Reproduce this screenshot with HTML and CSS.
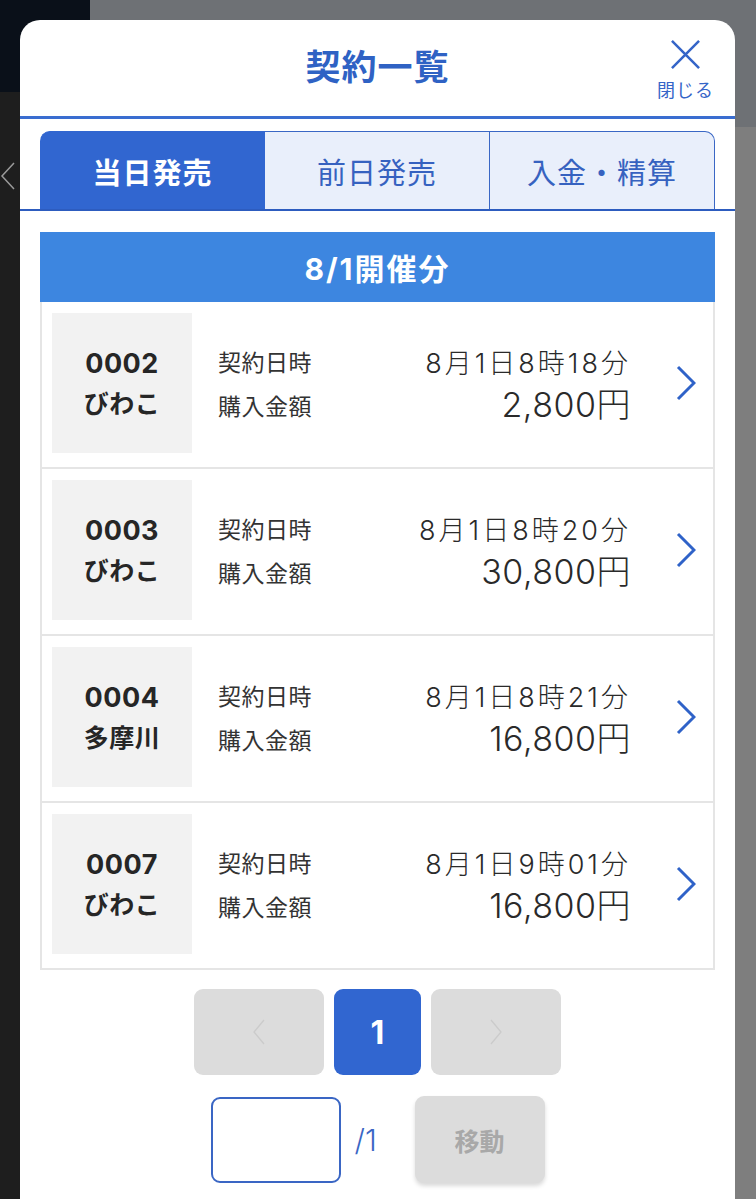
FILE: index.html
```html
<!DOCTYPE html>
<html lang="ja">
<head>
<meta charset="utf-8">
<title>契約一覧</title>
<link rel="stylesheet" href="styles.css">
</head>
<body>
<div class="under-page" aria-hidden="true">
  <svg class="under-back" viewBox="0 0 16 30"><path d="M14 2 L2 15 L14 28"/></svg>
</div>
<div class="modal">
  <header class="modal-header">
    <div class="header-spacer"></div>
    <h1 class="modal-title">契約一覧</h1>
    <button class="close-btn" type="button">
      <svg class="close-icon" viewBox="0 0 32 32"><path d="M2 2 L30 30 M30 2 L2 30"/></svg>
      <span class="close-label">閉じる</span>
    </button>
  </header>
  <nav class="tabs">
    <div class="tab tab-active">当日発売</div>
    <div class="tab tab-mid">前日発売</div>
    <div class="tab tab-last">入金・精算</div>
  </nav>
  <section class="content">
    <div class="date-bar">8/1開催分</div>
    <ul class="contract-list">
      <li class="contract">
        <div class="place"><span class="num">0002</span><span class="name">びわこ</span></div>
        <dl class="info">
          <dt>契約日時</dt><dd class="date">8月1日8時18分</dd>
          <dt>購入金額</dt><dd class="amount">2,800円</dd>
        </dl>
        <svg class="chev" viewBox="0 0 20 36"><path d="M2 2 L18 18 L2 34"/></svg>
      </li>
      <li class="contract">
        <div class="place"><span class="num">0003</span><span class="name">びわこ</span></div>
        <dl class="info">
          <dt>契約日時</dt><dd class="date">8月1日8時20分</dd>
          <dt>購入金額</dt><dd class="amount">30,800円</dd>
        </dl>
        <svg class="chev" viewBox="0 0 20 36"><path d="M2 2 L18 18 L2 34"/></svg>
      </li>
      <li class="contract">
        <div class="place"><span class="num">0004</span><span class="name">多摩川</span></div>
        <dl class="info">
          <dt>契約日時</dt><dd class="date">8月1日8時21分</dd>
          <dt>購入金額</dt><dd class="amount">16,800円</dd>
        </dl>
        <svg class="chev" viewBox="0 0 20 36"><path d="M2 2 L18 18 L2 34"/></svg>
      </li>
      <li class="contract">
        <div class="place"><span class="num">0007</span><span class="name">びわこ</span></div>
        <dl class="info">
          <dt>契約日時</dt><dd class="date">8月1日9時01分</dd>
          <dt>購入金額</dt><dd class="amount">16,800円</dd>
        </dl>
        <svg class="chev" viewBox="0 0 20 36"><path d="M2 2 L18 18 L2 34"/></svg>
      </li>
    </ul>
    <div class="pager">
      <button class="page-btn page-arrow" type="button"><svg class="page-chev" viewBox="0 0 12 26"><path d="M11 1 L1 13 L11 25"/></svg></button>
      <button class="page-btn page-current" type="button">1</button>
      <button class="page-btn page-arrow" type="button"><svg class="page-chev" viewBox="0 0 12 26"><path d="M1 1 L11 13 L1 25"/></svg></button>
    </div>
    <div class="jump">
      <input class="jump-input" type="text" aria-label="ページ">
      <span class="jump-total">/1</span>
      <button class="jump-btn" type="button">移動</button>
    </div>
  </section>
</div>
</body>
</html>
```

FILE: styles.css
```css
* { box-sizing: border-box; }

html, body {
  margin: 0;
  padding: 0;
}

body {
  height: 1199px;
  overflow: hidden;
  padding: 20px 21px 0 20px;
  font-family: "Noto Sans CJK JP", "Noto Sans", sans-serif;
  color: #222;
  background:
    linear-gradient(#0a1019, #0a1019) 0 0 / 90px 92px no-repeat,
    linear-gradient(#1e1e1e, #1e1e1e) 0 0 / 20px 100% no-repeat,
    linear-gradient(#6e7175, #6e7175) 0 0 / 100% 127px no-repeat,
    #7e7e7e;
  position: relative;
}

.under-page {
  position: absolute;
  left: 0;
  top: 161px;
  width: 20px;
  height: 32px;
}

.under-back {
  width: 16px;
  height: 30px;
  fill: none;
  stroke: #9a9a9a;
  stroke-width: 1.5;
}

.modal {
  position: relative;
  background: #fff;
  border-radius: 20px 20px 0 0;
  height: 1200px;
  overflow: hidden;
}

/* Header */
.modal-header {
  display: grid;
  grid-template-columns: 1fr auto 1fr;
  align-items: center;
  height: 99px;
  border-bottom: 3px solid #3a6dd0;
  padding: 0 21px;
}

.modal-title {
  margin: -7px 0 0;
  font-size: 35px;
  font-weight: 700;
  letter-spacing: 1px;
  color: #2f62c4;
  line-height: 1;
}

.close-btn {
  justify-self: end;
  display: flex;
  flex-direction: column;
  align-items: center;
  background: none;
  border: 0;
  padding: 0;
  margin-top: 0;
  font-family: inherit;
  cursor: pointer;
}

.close-icon {
  width: 31px;
  height: 31px;
  fill: none;
  stroke: #3565c8;
  stroke-width: 2.6;
}

.close-label {
  margin-top: 10px;
  font-size: 18px;
  line-height: 1;
  color: #3565c8;
  letter-spacing: 1px;
}

/* Tabs */
.tabs {
  display: grid;
  grid-template-columns: repeat(3, 1fr);
  padding: 12px 20px 0;
  border-bottom: 2px solid #2d5cbf;
}

.tab {
  height: 78px;
  display: flex;
  align-items: center;
  justify-content: center;
  font-size: 29px;
  color: #3662c0;
  background: #e9effb;
  border-top: 1.5px solid #3a67c5;
  letter-spacing: 1px;
}

.tab-active {
  background: #3166d0;
  color: #fff;
  font-weight: 700;
  border-top-color: #3166d0;
  border-radius: 10px 0 0 0;
}

.tab-mid {
  border-right: 1.5px solid #3a67c5;
}

.tab-last {
  border-right: 1.5px solid #3a67c5;
  border-radius: 0 10px 0 0;
}

/* Content */
.content {
  padding: 21px 20px 0;
}

.date-bar {
  height: 70px;
  background: #3d86e0;
  color: #fff;
  font-family: "Inter", "Noto Sans CJK JP", sans-serif;
  font-size: 30px;
  font-weight: 700;
  display: flex;
  align-items: center;
  justify-content: center;
  letter-spacing: 2px;
}

.contract-list {
  list-style: none;
  margin: 0;
  padding: 0;
  border: 2px solid #e5e5e5;
  border-top: 0;
}

.contract {
  display: flex;
  align-items: center;
  padding: 11px 10px 14px 10px;
  border-bottom: 2px solid #e5e5e5;
}

.contract:last-child {
  border-bottom: 0;
}

.place {
  width: 140px;
  height: 140px;
  flex: none;
  background: #f2f2f2;
  display: flex;
  flex-direction: column;
  align-items: center;
  justify-content: center;
  font-weight: 700;
  color: #262626;
}

.num {
  font-family: "Inter", "Noto Sans CJK JP", sans-serif;
  font-size: 27px;
  line-height: 38px;
  letter-spacing: 0.5px;
}

.name {
  font-size: 25px;
  line-height: 38px;
  letter-spacing: 0.5px;
}

.info {
  flex: 1;
  margin: 0 0 0 26px;
  display: grid;
  grid-template-columns: auto 1fr;
  grid-auto-rows: 44px;
  align-items: center;
}

.info dt {
  font-size: 23px;
  color: #333;
  letter-spacing: 0.5px;
}

.info dd {
  margin: 0;
  text-align: right;
  color: #2a2a2a;
  font-family: "Inter", "Noto Sans CJK JP", sans-serif;
  font-weight: 300;
}

.date {
  font-size: 27px;
  letter-spacing: 3px;
  margin-right: -3px;
}

.amount {
  font-size: 34px;
  letter-spacing: 0.5px;
  line-height: 1;
}

.chev {
  flex: none;
  width: 20px;
  height: 36px;
  margin: 0 7px 0 45px;
  fill: none;
  stroke: #2f62c8;
  stroke-width: 3;
}

/* Pager */
.pager {
  display: flex;
  justify-content: center;
  gap: 10px;
  margin-top: 19px;
}

.page-btn {
  height: 86px;
  border: 0;
  border-radius: 9px;
  font-family: inherit;
  display: flex;
  align-items: center;
  justify-content: center;
  padding: 0;
}

.page-arrow {
  width: 130px;
  background: #dcdcdc;
}

.page-chev {
  width: 12px;
  height: 26px;
  fill: none;
  stroke: #cbcbcb;
  stroke-width: 1.3;
}

.page-current {
  width: 87px;
  background: #3166d0;
  color: #fff;
  font-family: "Inter", sans-serif;
  font-size: 32px;
  font-weight: 700;
}

.jump {
  display: flex;
  justify-content: center;
  align-items: center;
  margin-top: 21px;
}

.jump-input {
  width: 130px;
  height: 86px;
  border: 2px solid #3a66c4;
  border-radius: 9px;
  background: #fff;
  font-family: inherit;
}

.jump-total {
  margin: 0 35px 0 14px;
  font-family: "Inter", sans-serif;
  font-size: 30px;
  font-weight: 300;
  color: #3a66c4;
  width: 25px;
}

.jump-btn {
  width: 130px;
  height: 87px;
  border: 0;
  border-radius: 9px;
  background: #dcdcdc;
  color: #a8a8a8;
  font-size: 25px;
  font-weight: 700;
  font-family: inherit;
  box-shadow: 0 3px 4px rgba(0, 0, 0, 0.15);
}
```
